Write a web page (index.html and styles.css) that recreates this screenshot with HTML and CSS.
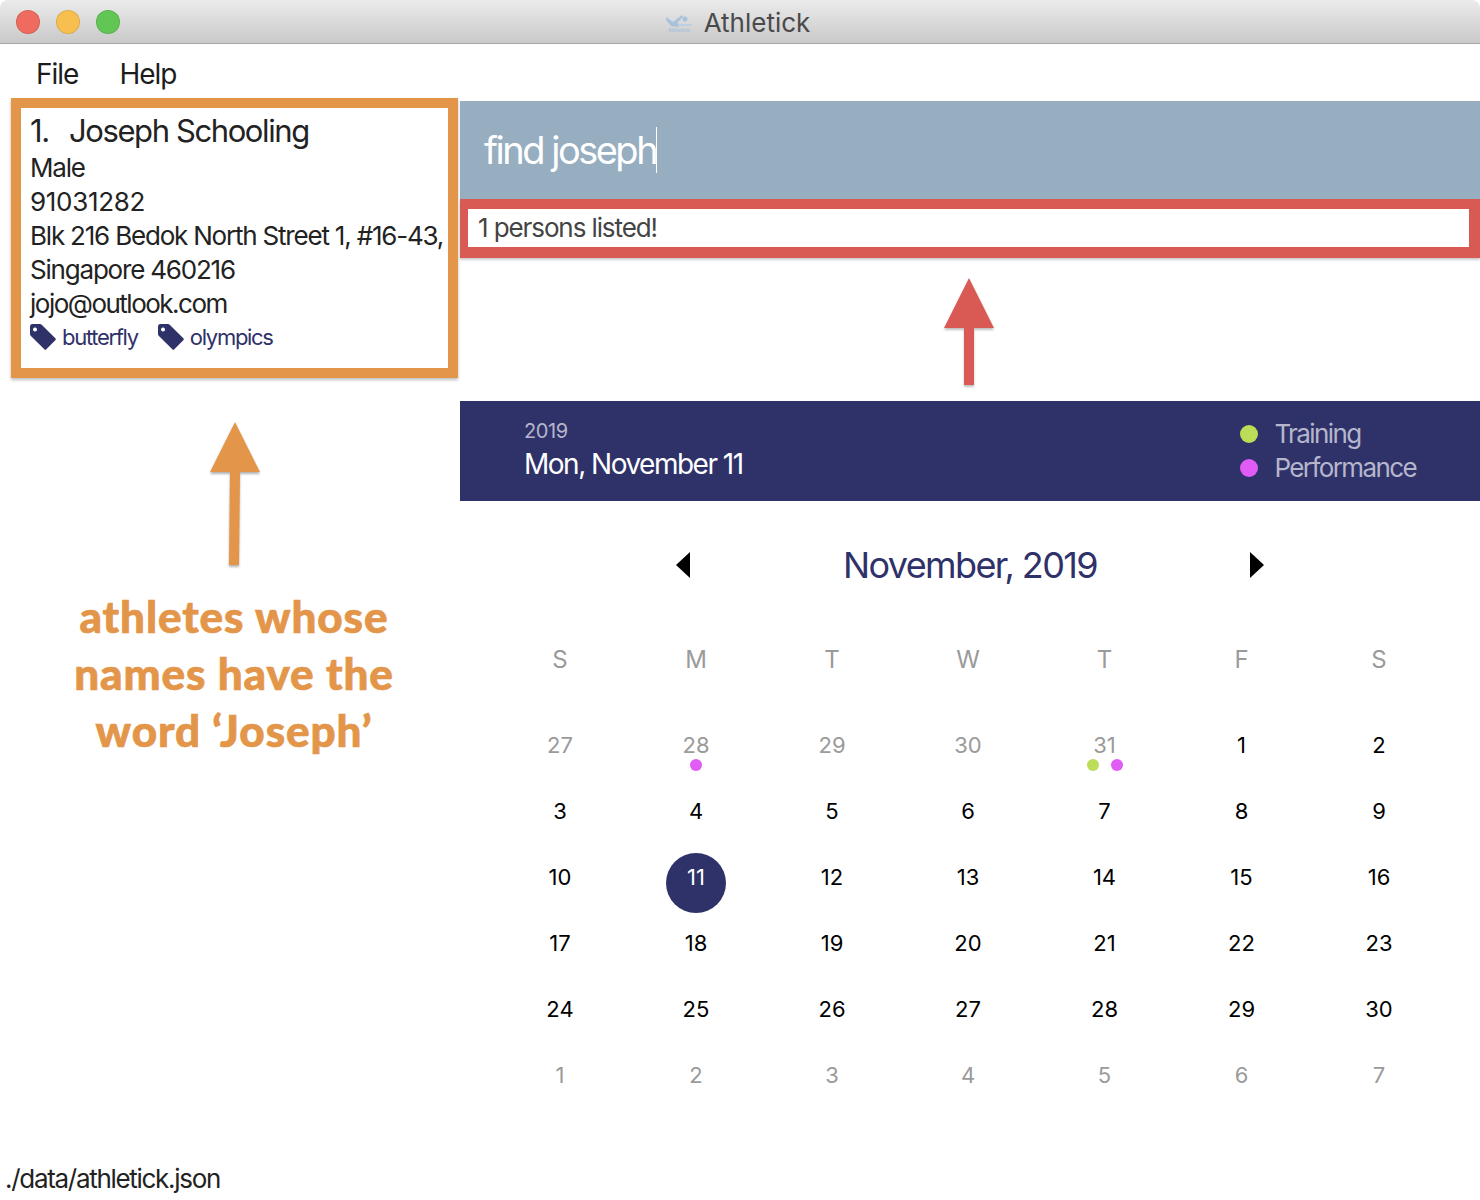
FILE: index.html
```html
<!DOCTYPE html>
<html>
	<head>
		<meta charset="UTF-8">
		<title>Athletick</title>
		<link rel="stylesheet" href="styles.css">
	</head>
	<body>
		<div class="window">
			<div class="titlebar">
				<div class="lights">
					<span class="light red"></span>
					<span class="light yellow"></span>
					<span class="light green"></span>
				</div>
				<div class="app-title">
					<svg class="app-icon" width="30" height="24" viewBox="0 0 30 24">
						<path d="M2 7l7 5 9-7 1 2-6 6 4 2-3 2-7-1-5-6z" fill="#a9c2dc"/>
						<circle cx="21" cy="9" r="2.5" fill="#a9c2dc"/>
						<path d="M14 14h14l-1 2H14z" fill="#bcd0e4"/>
						<text x="15" y="22" text-anchor="middle" class="app-icon-text">Athletick</text>
					</svg>
					<span>Athletick</span>
				</div>
			</div>
			<div class="menubar">
				<span>File</span>
				<span>Help</span>
			</div>
			<div class="main">
				<div class="left">
					<div class="card">
						<div class="name"><span class="index">1.</span>Joseph Schooling</div>
						<div class="line">Male</div>
						<div class="line phone">91031282</div>
						<div class="line nowrap">Blk 216 Bedok North Street 1, #16-43,</div>
						<div class="line">Singapore 460216</div>
						<div class="line email">jojo@outlook.com</div>
						<div class="tags">
							<span class="tag">
								<svg width="26" height="26" viewBox="0 0 26 26"><path d="M0 2.5A2.5 2.5 0 0 1 2.500 0H10q1 0 1.700.7L25.300 14.300q1 1 0 2L16.300 25.300q-1 1-2 0L.7 11.700Q0 11 0 10zM5 3.500a2 2 0 1 0 .01 0z" fill="#2f3169" fill-rule="evenodd"/></svg>
								butterfly
							</span>
							<span class="tag">
								<svg width="26" height="26" viewBox="0 0 26 26"><path d="M0 2.5A2.5 2.5 0 0 1 2.500 0H10q1 0 1.700.7L25.300 14.300q1 1 0 2L16.300 25.300q-1 1-2 0L.7 11.700Q0 11 0 10zM5 3.500a2 2 0 1 0 .01 0z" fill="#2f3169" fill-rule="evenodd"/></svg>
								olympics
							</span>
						</div>
					</div>
					<svg class="arrow-left" width="60" height="148" viewBox="0 0 60 148">
						<path d="M30 0L55 50H35L34 143H24L25 50H5z" fill="#e3964a"/>
					</svg>
					<div class="caption">athletes whose<br>names have the<br>word ‘Joseph’</div>
				</div>
				<div class="right">
					<div class="command"><span class="command-text">find joseph</span></div>
					<div class="result">1 persons listed!</div>
					<div class="arrow-row">
						<svg width="60" height="112" viewBox="0 0 60 112">
							<path d="M30 0L55 50H35V107H25V50H5z" fill="#d95a54"/>
						</svg>
					</div>
					<div class="cal-header">
						<div class="cal-title">
							<div class="cal-year">2019</div>
							<div class="cal-date">Mon, November 11</div>
						</div>
						<div class="legend">
							<div class="legend-item"><span class="dot-big lime"></span>Training</div>
							<div class="legend-item"><span class="dot-big pink"></span>Performance</div>
						</div>
					</div>
					<div class="month-row">
						<span class="prev"></span>
						<span class="month-name">November, 2019</span>
						<span class="next"></span>
					</div>
					<div class="weekdays">
						<span>S</span><span>M</span><span>T</span><span>W</span><span>T</span><span>F</span><span>S</span>
					</div>
					<div class="days">
						<div class="day muted">27</div>
						<div class="day muted">28<div class="marks"><i class="mark pink"></i></div></div>
						<div class="day muted">29</div>
						<div class="day muted">30</div>
						<div class="day muted">31<div class="marks"><i class="mark lime"></i><i class="mark pink"></i></div></div>
						<div class="day">1</div>
						<div class="day">2</div>
						<div class="day">3</div>
						<div class="day">4</div>
						<div class="day">5</div>
						<div class="day">6</div>
						<div class="day">7</div>
						<div class="day">8</div>
						<div class="day">9</div>
						<div class="day">10</div>
						<div class="day today">11</div>
						<div class="day">12</div>
						<div class="day">13</div>
						<div class="day">14</div>
						<div class="day">15</div>
						<div class="day">16</div>
						<div class="day">17</div>
						<div class="day">18</div>
						<div class="day">19</div>
						<div class="day">20</div>
						<div class="day">21</div>
						<div class="day">22</div>
						<div class="day">23</div>
						<div class="day">24</div>
						<div class="day">25</div>
						<div class="day">26</div>
						<div class="day">27</div>
						<div class="day">28</div>
						<div class="day">29</div>
						<div class="day">30</div>
						<div class="day muted">1</div>
						<div class="day muted">2</div>
						<div class="day muted">3</div>
						<div class="day muted">4</div>
						<div class="day muted">5</div>
						<div class="day muted">6</div>
						<div class="day muted">7</div>
					</div>
				</div>
			</div>
			<div class="statusbar">./data/athletick.json</div>
		</div>
	</body>
</html>
```

FILE: styles.css
```css
* {margin: 0; padding: 0; box-sizing: border-box;}
html, body {height: 100%; background: #fff;}
body {font-family: Inter, "Liberation Sans", sans-serif; color: #1f1f1f;}

.window {height: 1200px; display: flex; flex-direction: column; position: relative; overflow: hidden;}

/* title bar */
.titlebar {
	height: 44px;
	flex: none;
	background: linear-gradient(#ebebeb, #c9c9c9);
	border-bottom: 1px solid #a8a8a8;
	border-radius: 8px 8px 0 0;
	display: flex;
	align-items: center;
	justify-content: center;
	padding: 1px 6px 0 0;
	position: relative;
}
.lights {position: absolute; left: 16px; top: 10px; display: flex; gap: 16px;}
.light {width: 24px; height: 24px; border-radius: 50%; border: 1px solid rgba(0,0,0,0.1);}
.light.red {background: #ef6a5f;}
.light.yellow {background: #f6bf4f;}
.light.green {background: #62c654;}
.app-title {display: flex; align-items: center; gap: 10px; font-size: 26px; color: #4a4a4a;}
.app-icon-text {font-size: 5px; font-weight: 700; fill: #a9c2dc;}

/* menu */
.menubar {height: 54px; flex: none; display: flex; gap: 41px; align-items: center; padding: 6px 0 0 36px; font-size: 28px; letter-spacing: -1px; color: #1c1c1c;}

.main {flex: 1; display: grid; grid-template-columns: 460px 1020px; min-height: 0;}

/* left column */
.left {padding-left: 11px; display: flex; flex-direction: column;}
.card {
	width: 447px;
	height: 280px;
	border: 10px solid #e3964a;
	box-shadow: 0 2px 3px rgba(0,0,0,0.25);
	padding: 3px 0 0 9px;
	background: #fff;
}
.name {font-size: 31px; line-height: 40px; letter-spacing: -1.4px; color: #222;}
.index {display: inline-block; width: 39px;}
.line {font-size: 26px; line-height: 34px; letter-spacing: -1.2px; color: #222;}
.line.phone {letter-spacing: -0.3px;}
.line.email {letter-spacing: -1.5px;}
.nowrap {white-space: nowrap;}
.tags {display: flex; gap: 20px;}
.tag {display: flex; align-items: center; gap: 6px; font-size: 22px; line-height: 32px; letter-spacing: -1.3px; color: #2f3169;}
.arrow-left {display: block; margin: 44px 0 0 194px; filter: drop-shadow(0 2px 1px rgba(0,0,0,0.3));}
.caption {
	width: 446px;
	margin-top: 18px;
	text-align: center;
	font-family: Lato, sans-serif;
	font-weight: 900;
	font-size: 44px;
	line-height: 57px;
	letter-spacing: 0.9px;
	-webkit-text-stroke: 0.7px #e3964a;
	color: #e3964a;
}

/* right column */
.right {padding-top: 3px;}
.command {height: 98px; background: #97adc0; padding: 26px 0 0 24px;}
.command-text {display: inline-block; font-size: 38px; line-height: 46px; letter-spacing: -2.5px; color: #fff; border-right: 1px solid #fff;}
.result {
	height: 59px;
	border: solid #d95a54;
	border-width: 10px 11px 11px 8px;
	padding-left: 10px;
	font-size: 26px;
	line-height: 37px;
	letter-spacing: -1.1px;
	color: #444;
	box-shadow: 0 2px 2px rgba(0,0,0,0.2);
}
.arrow-row {height: 143px; padding: 20px 2px 0 0; display: flex; justify-content: center;}
.arrow-row svg {filter: drop-shadow(0 2px 1px rgba(0,0,0,0.25));}

.cal-header {height: 100px; background: #2f3169; display: flex; justify-content: space-between; align-items: center; padding: 0 64px 0 64px;}
.cal-title {padding-bottom: 4px;}
.cal-year {font-size: 20px; line-height: 30px; letter-spacing: -0.4px; color: #b5b6cc;}
.cal-date {font-size: 28px; line-height: 36px; letter-spacing: -1.5px; color: #fff;}
.legend-item {display: flex; align-items: center; gap: 16px; font-size: 26px; line-height: 34px; letter-spacing: -1.6px; color: #b5b6cc;}
.dot-big {width: 18px; height: 18px; border-radius: 50%;}
.lime {background: #bddc58;}
.pink {background: #e05cf5;}

.month-row {height: 128px; display: grid; grid-template-columns: 1fr auto 1fr; align-items: center; padding: 0 216px 0 216px;}
.month-name {font-size: 36px; letter-spacing: -1.6px; color: #2f3169;}
.prev, .next {width: 0; height: 0; border-top: 13px solid transparent; border-bottom: 13px solid transparent;}
.prev {border-right: 14px solid #000; justify-self: start;}
.next {border-left: 14px solid #000; justify-self: end;}

.weekdays, .days {display: grid; grid-template-columns: repeat(4, 136px) 137px 137px 138px; margin-left: 32px; text-align: center;}
.weekdays {height: 101px; font-size: 24px; color: #9a9a9a; padding-top: 16px;}
.days {grid-auto-rows: 66px; position: relative; z-index: 0;}
.day {position: relative; font-size: 22px; line-height: 30px; color: #000;}
.day.muted {color: #9a9a9a;}
.day.today {color: #fff;}
.day.today::before {
	content: "";
	position: absolute;
	left: 38px;
	top: -9px;
	width: 60px;
	height: 60px;
	border-radius: 50%;
	background: #2f3169;
	z-index: -1;
}
.marks {position: absolute; left: 0; right: 0; top: 29px; display: flex; justify-content: center; gap: 12px;}
.mark {width: 12px; height: 12px; border-radius: 50%;}

.statusbar {position: absolute; left: 5px; bottom: 4px; font-size: 26px; line-height: 34px; letter-spacing: -1.3px; color: #222;}
```
